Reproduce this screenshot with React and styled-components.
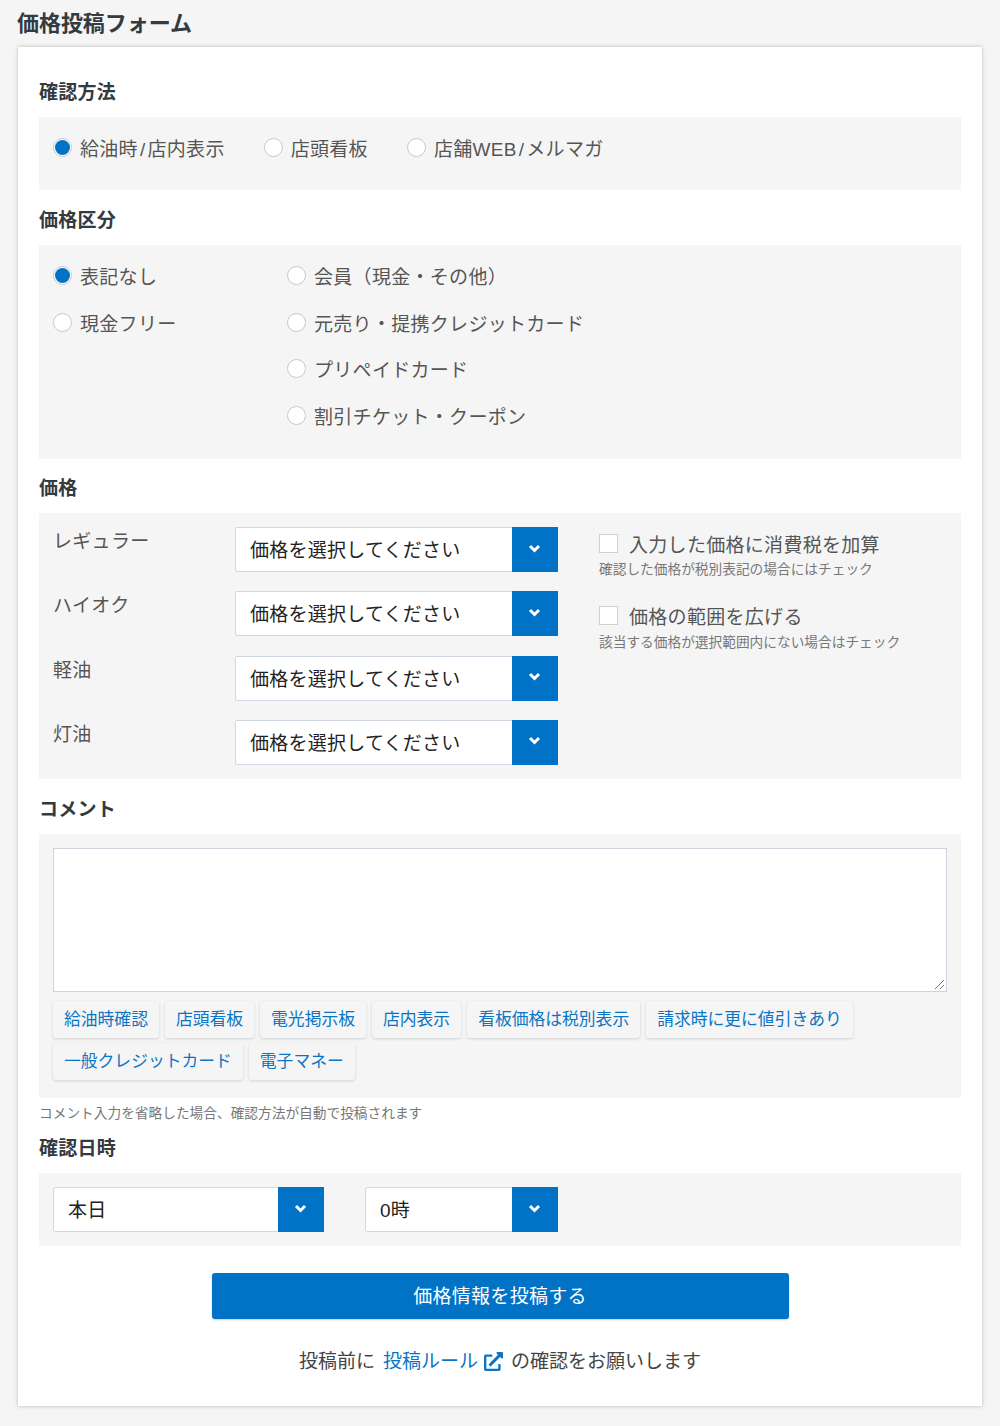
import React from "react";
import styled, { createGlobalStyle } from "styled-components";
import { FaExternalLinkAlt } from "react-icons/fa";

const GlobalStyle = createGlobalStyle`
  html, body {
    margin: 0;
    padding: 0;
    background: #f5f5f5;
    color: #333a40;
    font-family: "Liberation Sans", "Noto Sans CJK JP", sans-serif;
  }
  * {
    box-sizing: border-box;
  }
`;

const Page = styled.div`
  width: 1000px;
  height: 1426px;
  padding: 0 18px;
  overflow: hidden;
`;

const Title = styled.h1`
  margin: 0 0 0 -1px;
  height: 47px;
  font-size: 22px;
  line-height: 47px;
  font-weight: 700;
  letter-spacing: -0.05px;
  color: #333a40;
`;

const Card = styled.div`
  height: 1359px;
  padding: 29px 21px 0;
  background: #fff;
  box-shadow: 0 0 4px rgba(0, 0, 0, 0.25);
`;

const Heading = styled.h2`
  margin: 0;
  height: 41px;
  font-size: 19px;
  line-height: 34px;
  font-weight: 700;
  letter-spacing: 0.25px;
  color: #333a40;
`;

const Panel = styled.div`
  background: #f5f5f5;
  height: ${(props) => props.h}px;
  padding: 14px;
`;

const Gap = styled.div`
  height: ${(props) => props.h}px;
`;

const RadioRow = styled.div`
  display: flex;
  gap: 39px;
`;

const RadioColumns = styled.div`
  display: flex;
`;

const RadioColumn = styled.div`
  display: flex;
  flex-direction: column;
  gap: 13.5px;
  width: ${(props) => props.w}px;
`;

const RadioLabel = styled.label`
  display: flex;
  align-items: center;
  height: 33px;
  font-size: 19px;
  letter-spacing: 0.3px;
  color: #555;
  white-space: nowrap;
`;

const RadioMark = styled.span`
  width: 19px;
  height: 19px;
  margin-right: 8px;
  border-radius: 50%;
  background: #fff;
  border: 1px solid #c8c8c8;
  display: flex;
  align-items: center;
  justify-content: center;
  &::after {
    content: "";
    display: ${(props) => (props.checked ? "block" : "none")};
    width: 15px;
    height: 15px;
    border-radius: 50%;
    background: #0073c6;
  }
`;

const Slash = styled.span`
  margin: 0 2px;
`;

const PriceGrid = styled.div`
  display: flex;
`;

const PriceRows = styled.div`
  width: 505px;
  display: flex;
  flex-direction: column;
  gap: 19.33px;
`;

const PriceRow = styled.div`
  display: flex;
`;

const PriceLabel = styled.div`
  width: 182px;
  font-size: 19px;
  line-height: 30px;
  letter-spacing: 0.3px;
  color: #555;
`;

const SelectBox = styled.div`
  display: flex;
  width: ${(props) => props.w}px;
  height: 45px;
  background: #fff;
  border: 1px solid #d0d9e3;
  border-radius: 2px;
  margin-right: ${(props) => props.mr || 0}px;
`;

const SelectText = styled.div`
  flex: 1;
  padding-left: 14px;
  font-size: 19px;
  line-height: 45px;
  letter-spacing: 0.25px;
  color: #222;
`;

const SelectButton = styled.div`
  width: 46px;
  margin: -1px -1px -1px 0;
  padding: 0 1px 3px 0;
  background: #0073c6;
  display: flex;
  align-items: center;
  justify-content: center;
`;

const Options = styled.div`
  margin-left: 41px;
  padding-top: 3px;
`;

const CheckGroup = styled.div`
  height: 72.5px;
`;

const CheckLine = styled.label`
  display: flex;
  align-items: center;
  height: 26px;
  font-size: 19px;
  letter-spacing: 0.3px;
  color: #555;
`;

const CheckMark = styled.span`
  width: 19px;
  height: 19px;
  margin-right: 11px;
  background: #fff;
  border: 1px solid #d0d0d0;
`;

const SmallText = styled.div`
  margin-top: 4px;
  font-size: 13.7px;
  line-height: 20px;
  color: #777;
`;

const Comment = styled.div`
  height: 144px;
  background: #fff;
  border: 1px solid #ccd3dc;
  position: relative;
`;

const Grip = styled.svg`
  position: absolute;
  right: 1px;
  bottom: 1px;
`;

const Tags = styled.div`
  display: flex;
  flex-wrap: wrap;
  gap: 5px 6px;
  margin-top: 9px;
`;

const Tag = styled.a`
  height: 37px;
  padding: 0 11px;
  background: #f5f5f5;
  border-radius: 3px;
  box-shadow: 0 1px 3px rgba(0, 0, 0, 0.15);
  font-size: 16.8px;
  line-height: 37px;
  color: #0b75c4;
`;

const Note = styled.div`
  height: 32px;
  font-size: 13.7px;
  line-height: 32px;
  color: #777;
`;

const DateRow = styled.div`
  display: flex;
`;

const SubmitButton = styled.button`
  display: block;
  width: 577px;
  height: 46px;
  margin: 27px auto 0;
  padding: 0 0 4px;
  border: 0;
  border-radius: 3px;
  background: #0073c6;
  box-shadow: 0 1px 2px rgba(0, 0, 0, 0.2);
  color: #fff;
  font-family: inherit;
  font-size: 19px;
  letter-spacing: 0.3px;
`;

const RuleLine = styled.p`
  margin: 26px 0 0;
  text-align: center;
  font-size: 19px;
  line-height: 34px;
  color: #444;
`;

const RuleLink = styled.a`
  margin: 0 8px;
  color: #0b75c4;
  svg {
    margin-left: 6px;
    vertical-align: -3px;
  }
`;

const Chevron = () => (
  <svg width="13" height="9" viewBox="0 0 13 9">
    <path d="M2 2 L6.5 6.5 L11 2" stroke="#fff" strokeWidth="3" fill="none" />
  </svg>
);

const Radio = ({ checked, children }) => (
  <RadioLabel>
    <RadioMark checked={checked} />
    <span>{children}</span>
  </RadioLabel>
);

const Select = ({ w, mr, children }) => (
  <SelectBox w={w} mr={mr}>
    <SelectText>{children}</SelectText>
    <SelectButton>
      <Chevron />
    </SelectButton>
  </SelectBox>
);

const prices = ["レギュラー", "ハイオク", "軽油", "灯油"];
const tags = [
  "給油時確認",
  "店頭看板",
  "電光掲示板",
  "店内表示",
  "看板価格は税別表示",
  "請求時に更に値引きあり",
  "一般クレジットカード",
  "電子マネー",
];

const App = () => {
  return (
    <Page>
      <GlobalStyle />
      <Title>価格投稿フォーム</Title>
      <Card>
        <Heading>確認方法</Heading>
        <Panel h={73}>
          <RadioRow>
            <Radio checked>
              給油時<Slash>/</Slash>店内表示
            </Radio>
            <Radio>店頭看板</Radio>
            <Radio>
              店舗WEB<Slash>/</Slash>メルマガ
            </Radio>
          </RadioRow>
        </Panel>
        <Gap h={14} />
        <Heading>価格区分</Heading>
        <Panel h={214}>
          <RadioColumns>
            <RadioColumn w={234}>
              <Radio checked>表記なし</Radio>
              <Radio>現金フリー</Radio>
            </RadioColumn>
            <RadioColumn w={400}>
              <Radio>会員（現金・その他）</Radio>
              <Radio>元売り・提携クレジットカード</Radio>
              <Radio>プリペイドカード</Radio>
              <Radio>割引チケット・クーポン</Radio>
            </RadioColumn>
          </RadioColumns>
        </Panel>
        <Gap h={13} />
        <Heading>価格</Heading>
        <Panel h={266}>
          <PriceGrid>
            <PriceRows>
              {prices.map((name) => (
                <PriceRow key={name}>
                  <PriceLabel>{name}</PriceLabel>
                  <Select w={323}>価格を選択してください</Select>
                </PriceRow>
              ))}
            </PriceRows>
            <Options>
              <CheckGroup>
                <CheckLine>
                  <CheckMark />
                  入力した価格に消費税を加算
                </CheckLine>
                <SmallText>確認した価格が税別表記の場合にはチェック</SmallText>
              </CheckGroup>
              <CheckGroup>
                <CheckLine>
                  <CheckMark />
                  価格の範囲を広げる
                </CheckLine>
                <SmallText>該当する価格が選択範囲内にない場合はチェック</SmallText>
              </CheckGroup>
            </Options>
          </PriceGrid>
        </Panel>
        <Gap h={14} />
        <Heading>コメント</Heading>
        <Panel h={264}>
          <Comment>
            <Grip width="12" height="12" viewBox="0 0 12 12">
              <path d="M2 11 L11 2 M7 11 L11 7" stroke="#777" strokeWidth="1" fill="none" />
            </Grip>
          </Comment>
          <Tags>
            {tags.map((tag) => (
              <Tag key={tag}>{tag}</Tag>
            ))}
          </Tags>
        </Panel>
        <Note>コメント入力を省略した場合、確認方法が自動で投稿されます</Note>
        <Gap h={2} />
        <Heading>確認日時</Heading>
        <Panel h={73}>
          <DateRow>
            <Select w={271} mr={41}>本日</Select>
            <Select w={193}>0時</Select>
          </DateRow>
        </Panel>
        <SubmitButton>価格情報を投稿する</SubmitButton>
        <RuleLine>
          投稿前に
          <RuleLink>
            投稿ルール
            <FaExternalLinkAlt size={19} />
          </RuleLink>
          の確認をお願いします
        </RuleLine>
      </Card>
    </Page>
  );
};

export default App;
